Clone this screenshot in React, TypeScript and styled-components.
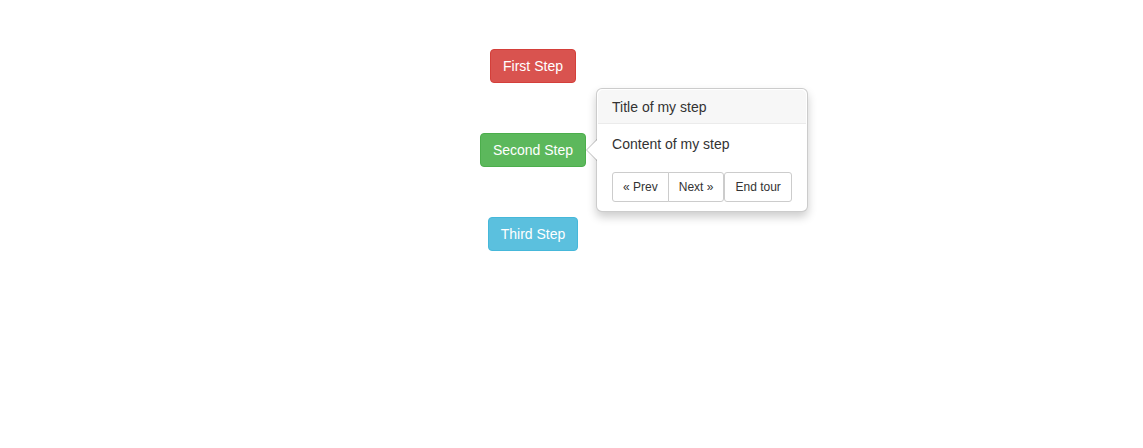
import React from "react";
import styled, { createGlobalStyle } from "styled-components";

const GlobalStyle = createGlobalStyle`
  html, body { margin: 0; padding: 0; background: #fff; }
  body {
    font-family: "Liberation Sans", Arial, Helvetica, sans-serif;
    font-size: 14px;
    line-height: 1.42857143;
    color: #333;
  }
`;

const Stage = styled.div`
  width: 1066px;
  padding-top: 49px;
  display: flex;
  flex-direction: column;
  align-items: center;
  gap: 50px;
`;

const variants = {
  danger: { bg: "#d9534f", border: "#d43f3a" },
  success: { bg: "#5cb85c", border: "#4cae4c" },
  info: { bg: "#5bc0de", border: "#46b8da" },
};

const StepButton = styled.button<{ $variant: keyof typeof variants }>`
  display: inline-block;
  padding: 6px 12px;
  font-family: inherit;
  font-size: 14px;
  line-height: 20px;
  color: #fff;
  background: ${(p) => variants[p.$variant].bg};
  border: 1px solid ${(p) => variants[p.$variant].border};
  border-radius: 4px;
  cursor: pointer;
  white-space: nowrap;
`;

const Anchor = styled.div`
  position: relative;
  display: inline-block;
`;

const Popover = styled.div`
  position: absolute;
  left: 100%;
  top: 50%;
  transform: translateY(-50%);
  margin-left: 10px;
  padding: 1px;
  width: max-content;
  max-width: 276px;
  background: #fff;
  border: 1px solid rgba(0, 0, 0, 0.2);
  border-radius: 6px;
  box-shadow: 0 5px 10px rgba(0, 0, 0, 0.2);
  text-align: left;
  z-index: 10;

  &::before,
  &::after {
    content: "";
    position: absolute;
    top: 50%;
    width: 0;
    height: 0;
    border-style: solid;
    border-color: transparent;
  }
  &::before {
    left: -11px;
    margin-top: -11px;
    border-width: 11px 11px 11px 0;
    border-right-color: rgba(0, 0, 0, 0.25);
  }
  &::after {
    left: -10px;
    margin-top: -10px;
    border-width: 10px 10px 10px 0;
    border-right-color: #fff;
  }
`;

const Title = styled.h3`
  margin: 0;
  padding: 9px 14px 7px;
  font-size: 14px;
  font-weight: normal;
  line-height: 17px;
  background: #f7f7f7;
  border-bottom: 1px solid #ebebeb;
  border-radius: 5px 5px 0 0;
`;

const Content = styled.div`
  padding: 10px 14px 9px;
  line-height: 20px;
`;

const Nav = styled.div`
  padding: 9px 14px 8px;
  display: flex;
  align-items: flex-start;
`;

const Group = styled.div`
  display: flex;
`;

const SmallButton = styled.button<{ $pos?: "first" | "last" | "single" }>`
  padding: 5px 10px;
  font-family: inherit;
  font-size: 12px;
  line-height: 18px;
  color: #333;
  background: #fff;
  border: 1px solid #ccc;
  border-radius: ${(p) =>
    p.$pos === "first" ? "3px 0 0 3px" : p.$pos === "last" ? "0 3px 3px 0" : "3px"};
  margin-left: ${(p) => (p.$pos === "last" ? "-1px" : "0")};
  white-space: nowrap;
  cursor: pointer;
`;

export default function App() {
  return (
    <>
      <GlobalStyle />
      <Stage>
        <StepButton $variant="danger">First Step</StepButton>
        <Anchor>
          <StepButton $variant="success">Second Step</StepButton>
          <Popover>
            <Title>Title of my step</Title>
            <Content>Content of my step</Content>
            <Nav>
              <Group>
                <SmallButton $pos="first">« Prev</SmallButton>
                <SmallButton $pos="last">Next »</SmallButton>
              </Group>
              <SmallButton $pos="single">End tour</SmallButton>
            </Nav>
          </Popover>
        </Anchor>
        <StepButton $variant="info">Third Step</StepButton>
      </Stage>
    </>
  );
}
